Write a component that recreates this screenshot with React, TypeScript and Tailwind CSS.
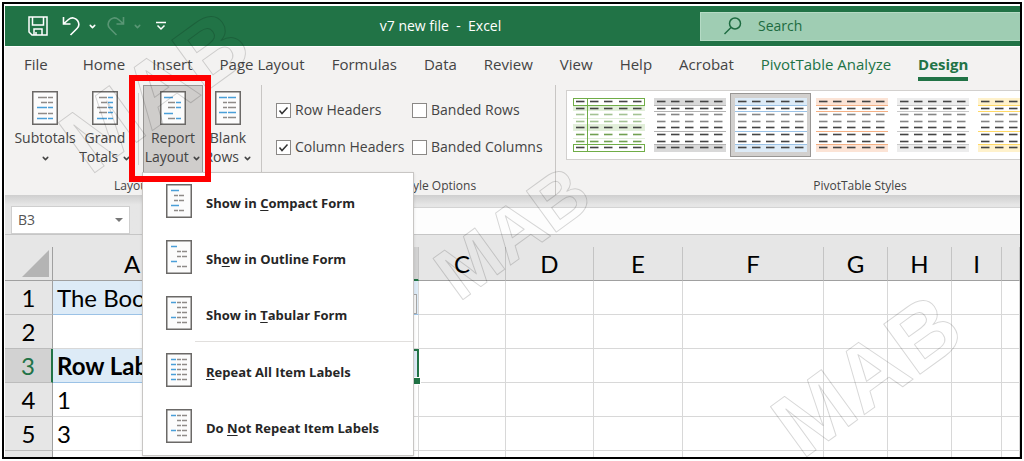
import type { ReactNode } from "react";
import clsx from "clsx";
import { ChevronDown } from "lucide-react";

type Segment = [from: number, to: number, tone: "blue" | "gray"];
type IconRow = [y: number, ...segments: Segment[]];

const BLUE = "#4a9fd8";
const GRAY = "#8f8b88";

const subtotalsRows: IconRow[] = [
  [6, [6, 15, "gray"], [16, 21, "gray"]],
  [11, [9, 15, "gray"], [16, 21, "gray"]],
  [16, [5, 15, "blue"], [16, 21, "blue"]],
  [22, [6, 15, "gray"], [16, 21, "gray"]],
  [27, [5, 15, "blue"], [16, 21, "blue"]],
];

const grandTotalsRows: IconRow[] = [
  [6, [7, 15, "gray"], [16, 21, "blue"]],
  [11, [9, 15, "gray"], [16, 21, "blue"]],
  [16, [5, 15, "gray"], [16, 21, "blue"]],
  [21, [7, 15, "gray"], [16, 21, "blue"]],
  [27, [5, 15, "blue"], [16, 21, "blue"]],
];

const reportLayoutRows: IconRow[] = [
  [6, [4, 13, "blue"]],
  [11, [8, 15, "gray"], [16, 21, "blue"]],
  [16, [8, 15, "gray"], [16, 21, "blue"]],
  [22, [4, 13, "blue"]],
  [27, [8, 15, "gray"], [16, 21, "blue"]],
];

const blankRowsRows: IconRow[] = [
  [6, [4, 12, "blue"], [13, 21, "blue"]],
  [11, [8, 12, "gray"], [13, 21, "gray"]],
  [16, [8, 12, "gray"], [13, 21, "gray"]],
  [21, [4, 12, "blue"], [13, 21, "blue"]],
  [26, [8, 12, "gray"], [13, 21, "gray"]],
];

const compactRows: IconRow[] = [
  [6, [5, 13, "blue"]],
  [11, [8, 12, "gray"], [13, 18, "gray"]],
  [16, [8, 12, "gray"], [13, 18, "gray"]],
  [21, [5, 13, "blue"]],
  [26, [8, 12, "gray"], [13, 18, "gray"]],
];

const outlineRows: IconRow[] = [
  [6, [5, 11, "blue"]],
  [11, [11, 15, "gray"], [16, 21, "gray"]],
  [16, [11, 15, "gray"], [16, 21, "gray"]],
  [21, [5, 11, "blue"]],
  [26, [11, 15, "gray"], [16, 21, "gray"]],
];

const labelledRow = (y: number): IconRow => [y, [5, 10, "blue"], [11, 15, "gray"], [16, 21, "gray"]];
const plainRow = (y: number): IconRow => [y, [11, 15, "gray"], [16, 21, "gray"]];

const tabularRows = [labelledRow(6), plainRow(11), plainRow(16), labelledRow(21), plainRow(26)];
const repeatRows = [labelledRow(6), labelledRow(11), labelledRow(16), labelledRow(21), labelledRow(26)];

function SheetIcon({ rows }: { rows: IconRow[] }) {
  return (
    <svg width="26" height="34" viewBox="0 0 26 34" className="shrink-0" aria-hidden="true">
      <rect x="0.75" y="0.75" width="24.5" height="32.5" fill="#fcfcfc" stroke="#6b6967" strokeWidth="1.5" />
      {rows.map(([y, ...segments]) =>
        segments.map(([from, to, tone]) => (
          <line
            key={`${y}-${from}`}
            x1={from}
            x2={to}
            y1={y + 0.5}
            y2={y + 0.5}
            stroke={tone === "blue" ? BLUE : GRAY}
            strokeWidth="1.5"
          />
        ))
      )}
    </svg>
  );
}

const tabs = ["Home", "Insert", "Page Layout", "Formulas", "Data", "Review", "View", "Help", "Acrobat"];

const menuItems: { before: string; hotkey: string; after: string; rows: IconRow[] }[] = [
  { before: "Show in ", hotkey: "C", after: "ompact Form", rows: compactRows },
  { before: "Sh", hotkey: "o", after: "w in Outline Form", rows: outlineRows },
  { before: "Show in ", hotkey: "T", after: "abular Form", rows: tabularRows },
  { before: "", hotkey: "R", after: "epeat All Item Labels", rows: repeatRows },
  { before: "Do ", hotkey: "N", after: "ot Repeat Item Labels", rows: tabularRows },
];

const options = [
  { id: "row-headers", label: "Row Headers", checked: true },
  { id: "banded-rows", label: "Banded Rows", checked: false },
  { id: "column-headers", label: "Column Headers", checked: true },
  { id: "banded-columns", label: "Banded Columns", checked: false },
];

const styles = [
  { name: "Light green", band: "#e2efda", line: "#70ad47", outlined: true },
  { name: "Light gray", band: "#d9d9d9", line: "#b3b3b3" },
  { name: "Light blue", band: "#ddebf7", line: "#9bc2e6", selected: true },
  { name: "Light orange", band: "#fce4d6", line: "#f4b084" },
  { name: "Pale gray", band: "#ededed", line: "#c9c9c9" },
  { name: "Light yellow", band: "#fff2cc", line: "#ffd966" },
];

const dashRows = [3, 10, 16, 23, 29, 36, 43, 49];
const dashColumns = [3, 17, 31, 46, 60];

function StyleThumb({ band, line, outlined }: { band: string; line: string; outlined?: boolean }) {
  const dashColor = (index: number) => {
    if (outlined && (index === 2 || index === 3)) return "#a3c293";
    if (outlined && (index === 5 || index === 6)) return "#70a050";
    return index === 2 || index === 3 ? "#858585" : "#444444";
  };

  return (
    <svg width="72" height="54" viewBox="0 0 72 54" aria-hidden="true">
      <rect width="72" height="54" fill="#ffffff" />
      <rect width="72" height="8" fill={band} />
      <rect y="46" width="72" height="8" fill={band} />
      {outlined ? (
        <>
          <rect y="8" width="72" height="5" fill={band} />
          <rect y="26" width="72" height="7" fill={band} />
          <path d="M0 20.500h72M0 40.500h72" stroke={band} />
          <rect x="0.500" y="0.500" width="71" height="7" fill="#ffffff" stroke={line} />
          <rect x="0.500" y="46.500" width="71" height="7" fill="#ffffff" stroke={line} />
          <path d="M14.500 0v54" stroke={line} />
        </>
      ) : (
        <path d="M0 7.500h72M0 13.500h72M0 33.500h72M0 46.500h72" stroke={line} />
      )}
      {dashRows.map((y, index) =>
        dashColumns.map((x) => (
          <rect key={`${x}-${y}`} x={x} y={y - 0.3} width="8.500" height="1.600" fill={dashColor(index)} />
        ))
      )}
    </svg>
  );
}

interface RibbonButtonProps {
  rows: IconRow[];
  children: ReactNode;
  active?: boolean;
  narrow?: boolean;
}

function RibbonButton({ rows, children, active, narrow }: RibbonButtonProps) {
  return (
    <button
      type="button"
      className={clsx(
        "flex h-[88px] flex-col items-center border pt-[5px] text-sm leading-[19px] whitespace-nowrap",
        narrow ? "w-[50px]" : "w-[60px]",
        active ? "border-[#989694] bg-[#cfcdcb]" : "border-transparent"
      )}
    >
      <SheetIcon rows={rows} />
      <span className="mt-[3px] flex flex-col items-center">{children}</span>
    </button>
  );
}

function Arrow() {
  return <ChevronDown className="inline size-[9px]" strokeWidth={4} />;
}

function LayoutMenu() {
  return (
    <div
      role="menu"
      className="absolute top-[87px] -left-px z-20 w-[272px] border border-[#c8c6c4] bg-white pb-px shadow-sm"
    >
      {menuItems.map((item, index) => (
        <div key={item.after}>
          {index === 3 && <div className="ml-13 h-px bg-[#e1dfdd]" />}
          <button
            type="button"
            role="menuitem"
            className="flex h-14 w-full items-center gap-[14px] pl-[23px] text-left text-[13px] font-bold text-[#262626]"
          >
            <SheetIcon rows={item.rows} />
            <span className="pt-[6px] whitespace-pre">
              {item.before}
              <span className="underline underline-offset-2">{item.hotkey}</span>
              {item.after}
            </span>
          </button>
        </div>
      ))}
    </div>
  );
}

function TitleBar() {
  return (
    <header className="flex h-10 shrink-0 items-center bg-[#217346] text-white">
      <div className="flex w-44 shrink-0 items-center pl-[23px]">
        <button type="button" aria-label="Save">
          <svg width="20" height="20" viewBox="0 0 20 20" fill="none" stroke="currentColor" strokeWidth="1.500">
            <path d="M1 1h18v18H4l-3-3zM4.500 1v8h11V1M6 19v-6h8v6M8 19v-3" />
          </svg>
        </button>
        <button type="button" aria-label="Undo" className="ml-[14px]">
          <svg width="18" height="20" viewBox="0 0 18 20" fill="none" stroke="currentColor" strokeWidth="1.600">
            <path d="M1.500 1v7h7M1.500 8l5-4.500c3-2.500 7-2 9 1s1.500 6-.5 8L8.500 19" />
          </svg>
        </button>
        <ChevronDown className="ml-2 size-[9px]" strokeWidth={4} />
        <button type="button" aria-label="Redo" className="ml-[10px] opacity-25">
          <svg width="18" height="20" viewBox="0 0 18 20" fill="none" stroke="currentColor" strokeWidth="1.600">
            <path d="M16.500 1v7h-7M16.500 8l-5-4.500c-3-2.500-7-2-9 1s-1.500 6 .5 8L9.500 19" />
          </svg>
        </button>
        <ChevronDown className="ml-2 size-[9px] opacity-25" strokeWidth={4} />
        <button type="button" aria-label="Customize Quick Access Toolbar" className="ml-[14px]">
          <svg width="10" height="10" viewBox="0 0 10 10" fill="none" stroke="currentColor" strokeWidth="1.500">
            <path d="M0 1.500h10M1.500 4.500L5 8l3.500-3.500" />
          </svg>
        </button>
      </div>
      <h1 className="flex-1 text-center text-sm whitespace-pre">{"v7 new file  -  Excel"}</h1>
      <label className="flex h-[29px] w-80 shrink-0 items-center gap-4 border border-r-0 border-[#b5dbc5] bg-[#9fcdb3] pl-[23px] text-[#1d6b40]">
        <svg width="18" height="18" viewBox="0 0 18 18" fill="none" stroke="currentColor" strokeWidth="1.500">
          <circle cx="11" cy="6.500" r="5.500" />
          <path d="M7 10.500L.5 17" />
        </svg>
        <input
          type="text"
          aria-label="Search"
          placeholder="Search"
          className="min-w-0 flex-1 bg-transparent text-sm outline-none placeholder:text-[#1d6b40]"
        />
      </label>
    </header>
  );
}

function Tabs() {
  return (
    <nav className="mt-px flex h-[38px] shrink-0 items-start gap-[27px] bg-[#f3f2f1] pt-[5px] pl-[19px] text-[15px] leading-6 whitespace-nowrap text-[#444444]">
      <button type="button" className="mr-2">
        File
      </button>
      {tabs.map((tab) => (
        <button key={tab} type="button">
          {tab}
        </button>
      ))}
      <button type="button" className="text-[#217346]">
        PivotTable Analyze
      </button>
      <button type="button" className="border-b-4 border-[#217346] pb-px font-bold text-[#217346]">
        Design
      </button>
    </nav>
  );
}

function Ribbon() {
  return (
    <div className="flex h-[110px] shrink-0 bg-[#f3f2f1] text-[#444444]">
      <section className="relative flex w-[257px] shrink-0 flex-col border-r border-[#c8c6c4]">
        <div className="flex pl-[10px]">
          <RibbonButton rows={subtotalsRows}>
            <span>Subtotals</span>
            <span>
              <Arrow />
            </span>
          </RibbonButton>
          <RibbonButton rows={grandTotalsRows}>
            <span>Grand</span>
            <span>
              Totals <Arrow />
            </span>
          </RibbonButton>
          <div className="my-2 mr-1 ml-[3px] w-px bg-[#d2d0ce]" />
          <div className="relative">
            <RibbonButton rows={reportLayoutRows} active>
              <span>Report</span>
              <span>
                Layout <Arrow />
              </span>
            </RibbonButton>
            <LayoutMenu />
            {/* callout around the open button */}
            <div className="pointer-events-none absolute -top-[10px] -right-2 -bottom-[9px] -left-[14px] z-30 border-[6px] border-[#ff0000]" />
          </div>
          <RibbonButton rows={blankRowsRows} narrow>
            <span>Blank</span>
            <span>
              Rows <Arrow />
            </span>
          </RibbonButton>
        </div>
        <h2 className="mt-auto pb-[1px] text-center text-xs">Layout</h2>
      </section>

      <section className="flex w-[294px] shrink-0 flex-col border-r border-[#c8c6c4]">
        <div className="grid grid-cols-[136px_1fr] gap-y-[17px] pt-[15px] pl-[14px]">
          {options.map((option) => (
            <label key={option.id} htmlFor={option.id} className="flex items-center gap-1 text-sm whitespace-nowrap">
              <span className="relative flex">
                <input
                  id={option.id}
                  type="checkbox"
                  defaultChecked={option.checked}
                  className="peer size-[15px] appearance-none border border-[#8a8886] bg-white"
                />
                <svg
                  viewBox="0 0 15 15"
                  className="pointer-events-none absolute inset-0 hidden size-[15px] peer-checked:block"
                  fill="none"
                  stroke="#333333"
                  strokeWidth="1.500"
                >
                  <path d="M3.500 7.500l2.500 3 5.500-6" />
                </svg>
              </span>
              {option.label}
            </label>
          ))}
        </div>
        <h2 className="mt-auto pb-[1px] text-center text-xs">PivotTable Style Options</h2>
      </section>

      <section className="flex min-w-[608px] flex-1 flex-col">
        <div className="mt-[5px] ml-[10px] flex h-[70px] items-center border border-[#d2d0ce] bg-white pl-px">
          {styles.map((style) => (
            <button
              key={style.name}
              type="button"
              aria-label={style.name}
              className={clsx(
                "flex h-16 w-[81px] shrink-0 items-center justify-center border",
                style.selected ? "border-[#989694] bg-[#d2d0ce]" : "border-transparent"
              )}
            >
              <StyleThumb band={style.band} line={style.line} outlined={style.outlined} />
            </button>
          ))}
        </div>
        <h2 className="mt-auto pb-[1px] text-center text-xs">PivotTable Styles</h2>
      </section>
    </div>
  );
}

function FormulaBar() {
  return (
    <div className="flex h-10 shrink-0 items-end border-b border-[#c6c6c6] bg-linear-to-b from-[#cfcfcf] to-[#e6e6e6] to-25%">
      <div className="ml-[6px] flex h-[28px] w-[119px] shrink-0 items-center border border-[#cfcfcf] bg-white px-[6px]">
        <input
          type="text"
          aria-label="Name box"
          defaultValue="B3"
          className="min-w-0 flex-1 text-sm text-[#555555] outline-none"
        />
        <svg width="8" height="4" viewBox="0 0 8 4" className="shrink-0" aria-hidden="true">
          <path d="M0 0h8L4 4z" fill="#777777" />
        </svg>
      </div>
      <input
        type="text"
        aria-label="Formula"
        className="ml-5 h-[27px] min-w-0 flex-1 border-t border-[#d4d4d4] bg-[#fdfdfd] outline-none"
      />
    </div>
  );
}

const columns = ["A", "B", "C", "D", "E", "F", "G", "H", "I", ""];
const cellsA = ["The Book", "", "Row Labels", "1", "3"];

function Sheet() {
  return (
    <div className="min-h-0 flex-1 overflow-hidden bg-[#e6e6e6] pt-3 font-[Lato,sans-serif] text-2xl text-black">
      <table className="w-full table-fixed border-separate border-spacing-0 bg-white">
        <colgroup>
          <col className="w-12" />
          <col className="w-[159px]" />
          <col className="w-[207px]" />
          <col className="w-[87px]" />
          <col className="w-[88px]" />
          <col className="w-[89px]" />
          <col className="w-[141px]" />
          <col className="w-16" />
          <col className="w-16" />
          <col className="w-[50px]" />
          <col />
        </colgroup>
        <thead>
          <tr className="h-[34px] bg-[#e6e6e6]">
            <th className="border-r border-b border-[#a0a0a0] p-0">
              <svg width="27" height="27" viewBox="0 0 27 27" className="ml-auto mr-[3px]" aria-hidden="true">
                <path d="M27 0v27H0z" fill="#b4b4b4" />
              </svg>
            </th>
            {columns.map((column) => (
              <th
                key={column}
                scope="col"
                className={clsx(
                  "border-r border-r-[#c4c4c4] p-0 leading-7 font-normal",
                  column === "B"
                    ? "border-b-2 border-b-[#217346] bg-[#d2d2d2]"
                    : "border-b border-b-[#a0a0a0]"
                )}
              >
                {column}
              </th>
            ))}
          </tr>
        </thead>
        <tbody>
          {cellsA.map((text, index) => {
            const row = index + 1;
            const banded = row === 1 || row === 3;
            const line = banded ? "border-b-[#9bc2e6]" : "border-b-[#d8d8d8]";
            return (
              <tr key={row} className="h-[34px]">
                <th
                  scope="row"
                  className={clsx(
                    "border-b border-b-[#bcbcbc] p-0 leading-7 font-normal",
                    row === 3
                      ? "border-r-2 border-r-[#217346] bg-[#d2d2d2] text-[#217346]"
                      : "border-r border-r-[#a0a0a0] bg-[#e6e6e6]"
                  )}
                >
                  {row}
                </th>
                <td
                  className={clsx(
                    "overflow-hidden border-b py-0 pr-0 pl-1 leading-7 whitespace-nowrap",
                    line,
                    banded && "bg-[#ddebf7]",
                    row === 3 && "font-bold"
                  )}
                >
                  {text}
                </td>
                <td
                  className={clsx(
                    "p-0",
                    row === 3 ? "relative border-2 border-[#217346]" : "border-r border-b border-r-[#d8d8d8]",
                    row !== 3 && line,
                    banded && "bg-[#ddebf7]"
                  )}
                >
                  {row === 1 && (
                    <button
                      type="button"
                      aria-label="Filter"
                      className="mt-3 mr-px ml-auto block h-5 w-5 border border-[#a6a6a6] bg-[#f5f5f5]"
                    />
                  )}
                  {row === 3 && (
                    <span className="absolute -right-[3px] -bottom-[3px] size-[6px] bg-[#217346] outline outline-white" />
                  )}
                </td>
                {columns.slice(2).map((column) => (
                  <td key={column} className="border-r border-b border-[#d8d8d8] p-0" />
                ))}
              </tr>
            );
          })}
          {/* sliver of the next row at the bottom edge */}
          <tr className="h-[34px]">
            <td className="border-r border-[#a0a0a0] bg-[#e6e6e6]" />
            <td />
            {columns.slice(1).map((column) => (
              <td key={column} className="border-r border-[#d8d8d8]" />
            ))}
          </tr>
        </tbody>
      </table>
    </div>
  );
}

function Watermarks() {
  return (
    <svg
      className="pointer-events-none absolute inset-0 z-10 h-full w-full font-['Liberation_Sans',sans-serif] font-bold"
      fill="none"
      stroke="#000000"
      strokeOpacity="0.16"
      strokeLinejoin="round"
      textAnchor="middle"
      aria-hidden="true"
    >
      <text fontSize="90" dy="32" transform="translate(150 86) rotate(-36)">
        MAB
      </text>
      <text fontSize="74" dy="26" transform="translate(508 228) rotate(-36)">
        MAB
      </text>
      <text fontSize="90" dy="32" transform="translate(862 370) rotate(-36)">
        MAB
      </text>
    </svg>
  );
}

export default function App() {
  return (
    <div className="h-screen bg-white p-[2px] font-['Open_Sans',sans-serif]">
      <main className="relative flex h-full flex-col overflow-hidden border-2 border-black bg-white pt-[2px] pl-px">
        <TitleBar />
        <Tabs />
        <Ribbon />
        <FormulaBar />
        <Sheet />
        <Watermarks />
      </main>
    </div>
  );
}
